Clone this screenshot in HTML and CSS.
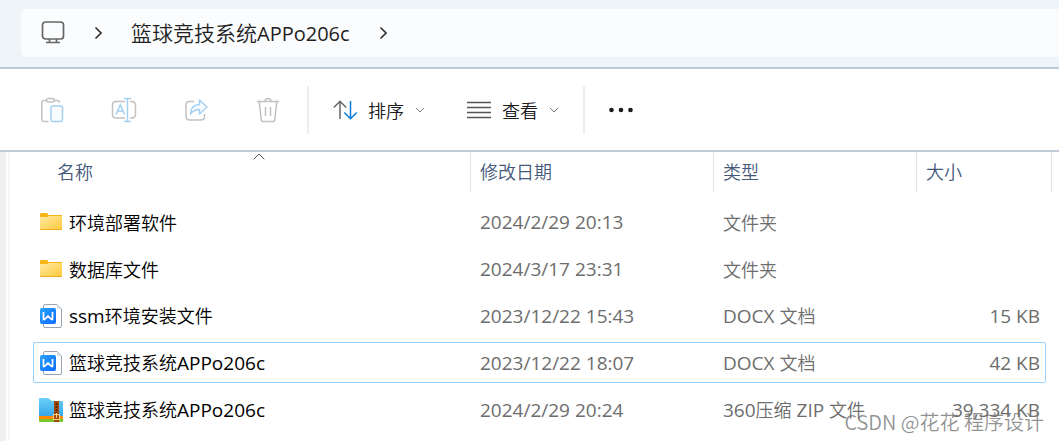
FILE: index.html
```html
<!DOCTYPE html>
<html lang="zh-CN">
<head>
  <meta charset="UTF-8" />
  <meta name="viewport" content="width=device-width, initial-scale=1.0"/>
  <title>篮球竞技系统APPo206c</title>
  <link rel="stylesheet" href="styles.css">
</head>
<body>

<svg class="defs" aria-hidden="true">
  <defs>
    <linearGradient id="folderFill" x1="0" y1="0" x2="1" y2="1">
      <stop offset="0" stop-color="#ffe9a2"/>
      <stop offset="1" stop-color="#ffcb3d"/>
    </linearGradient>
    <linearGradient id="docFill" x1="0" y1="0" x2="1" y2="1">
      <stop offset="0" stop-color="#29a3fb"/>
      <stop offset="1" stop-color="#0d6bff"/>
    </linearGradient>
    <linearGradient id="zipFill" x1="0" y1="0" x2="0" y2="1">
      <stop offset="0" stop-color="#69d0f8"/>
      <stop offset="1" stop-color="#35a3ea"/>
    </linearGradient>
  </defs>
  <symbol id="folder" viewBox="0 0 24 24">
    <path d="M1 4q0-1 1-1h6l1.500 2H23v4H1z" fill="#f9b515"/>
    <path d="M1 7h7.500L10 6h13v13H1z" fill="url(#folderFill)"/>
    <path d="M1 19h22q0 1-1 1H2q-1 0-1-1z" fill="#eeaa22"/>
  </symbol>
  <symbol id="docx" viewBox="0 0 24 24">
    <path d="M4.500 5V2q0-1.500 1.500-1.500h12l4.500 4.500v17q0 1.500-1.500 1.500H6q-1.500 0-1.500-1.500v-2" fill="#fff" stroke="#9aa2b3"/>
    <path d="M18.500 1V4q0 .5.500.500h3" fill="none" stroke="#d5d9e0"/>
    <rect x="1" y="4" width="16" height="16" rx="2" fill="url(#docFill)"/>
    <path d="M4.500 8v7.500h1L9 12l3.500 3.500h1V8" fill="none" stroke="#fff" stroke-width="1.700"/>
  </symbol>
  <symbol id="down" viewBox="0 0 10 6">
    <path d="M1 1l4 4 4-4" fill="none" stroke="#777"/>
  </symbol>
  <symbol id="next" viewBox="0 0 8 14">
    <path d="M1.500 1.500L7 7l-5.500 5.500" fill="none" stroke="#333" stroke-width="1.600"/>
  </symbol>
</svg>

<header class="topbar">
  <nav class="address" aria-label="路径">
    <a class="crumb" href="#" aria-label="此电脑">
      <svg width="24" height="24" viewBox="0 0 24 24" fill="none" stroke="#666" stroke-width="1.700">
        <rect x="1.500" y="1" width="21" height="17" rx="3"/>
        <path d="M8.500 18v3.500M15.500 18v3.500M5 21.500h14"/>
      </svg>
    </a>
    <svg class="sep" width="8" height="14"><use href="#next"/></svg>
    <a class="crumb" href="#">篮球竞技系统<span class="en">APPo206c</span></a>
    <svg class="sep" width="8" height="14"><use href="#next"/></svg>
  </nav>
</header>

<div class="toolbar">
  <div class="group icons">
    <button class="icon-btn" aria-label="粘贴" disabled>
      <svg width="24" height="26" viewBox="0 0 24 26" fill="none" stroke="#c2c2c2" stroke-width="1.500">
        <path d="M6 3.500H3.500q-1.700 0-1.700 1.700v17.600q0 1.700 1.700 1.700h5M15 3.500h2.500q1.700 0 1.700 1.700V6"/>
        <rect x="6.500" y="1.500" width="8" height="3.500" rx="1.700"/>
        <rect x="11" y="9" width="11.500" height="15.500" rx="1.700" stroke="#a4d0f2" fill="#f8fcff"/>
      </svg>
    </button>
    <button class="icon-btn" aria-label="重命名" disabled>
      <svg width="26" height="26" viewBox="0 0 26 26" fill="none" stroke="#c2c2c2" stroke-width="1.500">
        <path d="M14 4.500H5Q1.500 4.500 1.500 8v9.500Q1.500 21 5 21h9M19 4.500h1.500Q24.500 4.500 24.500 8.500v8.500q0 4-4 4H19"/>
        <path d="M5 17.500l4.300-9.700 4.200 9.700M6.700 14h5.200M13 1.500h7M13 24.500h7M16.500 1.500v23" stroke="#a4d0f2"/>
      </svg>
    </button>
    <button class="icon-btn" aria-label="共享" disabled>
      <svg width="24" height="24" viewBox="0 0 24 24" fill="none" stroke="#c2c2c2" stroke-width="1.500">
        <path d="M10 3.500H5.500Q2 3.500 2 7v11.500Q2 22 5.500 22H17q3.500 0 3.500-3.500V16"/>
        <path d="M15.500 2v4.500Q7 6.500 6.500 16q3.500-4.500 9-4.500V16l7.500-7z" stroke="#a4d0f2" stroke-linejoin="round" fill="#f8fcff"/>
      </svg>
    </button>
    <button class="icon-btn" aria-label="删除" disabled>
      <svg width="24" height="26" viewBox="0 0 24 26" fill="none" stroke="#c2c2c2" stroke-width="1.500">
        <path d="M1 4.500h22M3.200 4.500l2 18q.2 2 2.200 2h9.200q2 0 2.200-2l2-18M9 4.500q0-3 3-3t3 3M9.500 10v9M14.500 10v9"/>
      </svg>
    </button>
  </div>
  <div class="group menus">
    <button class="menu-btn">
      <svg width="24" height="20" viewBox="0 0 24 20" fill="none" stroke-width="1.500">
        <path d="M7 19V1.500M.8 7.500L7 1.300l6.200 6.200" stroke="#666"/>
        <path d="M17.500 1v17.500M11.300 12.500l6.200 6.200 6.200-6.200" stroke="#0a7bd8"/>
      </svg>
      排序
      <svg width="10" height="6"><use href="#down"/></svg>
    </button>
    <button class="menu-btn">
      <svg width="24" height="18" viewBox="0 0 24 18" stroke="#555" stroke-width="1.300">
        <path d="M0 1.500h24M0 6.500h24M0 11.500h24M0 16.500h24"/>
      </svg>
      查看
      <svg width="10" height="6"><use href="#down"/></svg>
    </button>
  </div>
  <div class="group more">
    <button class="more-btn" aria-label="更多">
      <svg width="24" height="6" viewBox="0 0 24 6" fill="#1a1a1a">
        <circle cx="2.500" cy="3" r="2.300"/><circle cx="12" cy="3" r="2.300"/><circle cx="21.500" cy="3" r="2.300"/>
      </svg>
    </button>
  </div>
</div>

<main class="files">
  <table>
    <thead>
      <tr>
        <th class="name"><div class="head">名称<svg class="sort" width="12" height="7" viewBox="0 0 12 7" fill="none" stroke="#555"><path d="M.7 6.300L6 1l5.300 5.300"/></svg></div></th>
        <th class="date"><div class="head">修改日期</div></th>
        <th class="type"><div class="head">类型</div></th>
        <th class="size"><div class="head">大小</div></th>
      </tr>
    </thead>
    <tbody>
      <tr>
        <td><div class="file"><svg width="24" height="24"><use href="#folder"/></svg>环境部署软件</div></td>
        <td><span class="en">2024/2/29 20:13</span></td>
        <td>文件夹</td>
        <td></td>
      </tr>
      <tr>
        <td><div class="file"><svg width="24" height="24"><use href="#folder"/></svg>数据库文件</div></td>
        <td><span class="en">2024/3/17 23:31</span></td>
        <td>文件夹</td>
        <td></td>
      </tr>
      <tr>
        <td><div class="file"><svg width="24" height="24"><use href="#docx"/></svg><span><span class="en">ssm</span>环境安装文件</span></div></td>
        <td><span class="en">2023/12/22 15:43</span></td>
        <td><span class="en">DOCX </span>文档</td>
        <td><span class="en">15 KB</span></td>
      </tr>
      <tr class="focused">
        <td><div class="file"><svg width="24" height="24"><use href="#docx"/></svg><span>篮球竞技系统<span class="en">APPo206c</span></span></div></td>
        <td><span class="en">2023/12/22 18:07</span></td>
        <td><span class="en">DOCX </span>文档</td>
        <td><span class="en">42 KB</span></td>
      </tr>
      <tr>
        <td>
          <div class="file">
            <svg width="24" height="24" viewBox="0 0 24 24">
              <path d="M0 1q0-1 1-1h8l4 3h10q1 0 1 1v15H0z" fill="url(#zipFill)"/>
              <path d="M0 18h24v3H0z" fill="#ff8a00"/>
              <path d="M0 21h24v2q0 1-1 1H1q-1 0-1-1z" fill="#7cc52c"/>
              <path d="M15 3h5v21h-5z" fill="#a04a10"/>
              <path d="M17.500 5v10" stroke="#5a2706" stroke-width="2" stroke-dasharray="2 1"/>
              <path d="M14.500 16.500h6v5h-6zM17.500 15v5" fill="none" stroke="#ffd27a"/>
            </svg>
            <span>篮球竞技系统<span class="en">APPo206c</span></span>
          </div>
        </td>
        <td><span class="en">2024/2/29 20:24</span></td>
        <td><span class="en">360</span>压缩<span class="en"> ZIP </span>文件</td>
        <td><span class="en">39,334 KB</span></td>
      </tr>
    </tbody>
  </table>
</main>

<div class="watermark">CSDN @花花 程序设计</div>

</body>
</html>
```
FILE: styles.css
```css
* {
  box-sizing: border-box;
}
body {
  margin: 0;
  min-height: 100vh;
  display: flex;
  flex-direction: column;
  position: relative;
  background: #fff;
  color: #000;
  font-family: "Noto Sans CJK SC", sans-serif;
  font-size: 18px;
  font-weight: 350;
  line-height: 24px;
}
button {
  border: none;
  background: none;
  padding: 0;
  font: inherit;
  color: #1a1a1a;
}
svg {
  display: block;
  flex: none;
}
.defs {
  position: absolute;
  width: 0;
  height: 0;
}
.en {
  font-family: "Open Sans", sans-serif;
  font-size: 19px;
  font-weight: 400;
}

/* address bar */
.topbar {
  background: #eff4f8;
  border-bottom: 2px solid #c0cad6;
  padding: 9px 0 10px 21px;
}
.address {
  display: flex;
  align-items: center;
  height: 48px;
  padding-left: 20px;
  background: #fbfcfe;
  border-radius: 6px 0 0 6px;
}
.crumb {
  color: #1f1f1f;
  text-decoration: none;
  font-size: 21px;
}
.crumb .en {
  font-size: 20px;
}
.sep {
  margin: 0 29px;
}

/* toolbar */
.toolbar {
  display: flex;
  align-items: center;
  height: 83px;
  padding-left: 28px;
  border-bottom: 2px solid #c0cad6;
}
.group {
  display: flex;
  align-items: center;
  height: 48px;
}
.icons {
  gap: 24px;
  padding-right: 15px;
}
.icon-btn {
  display: flex;
  justify-content: center;
  width: 48px;
}
.menus {
  gap: 42px;
  padding: 0 24px;
  border-left: 2px solid #ededed;
  border-right: 2px solid #ededed;
}
.menu-btn {
  display: flex;
  align-items: center;
  gap: 11px;
}
.more {
  padding-left: 24px;
}

/* file list */
.files {
  flex: 1;
  padding: 0 13px 0 23px;
  margin-left: 8px;
  border-left: 2px solid #f6f6f6;
  box-shadow: -2px 0 #fff, -8px 0 #f0f0f0;
}
table {
  width: 100%;
  margin-top: -6px;
  table-layout: fixed;
  border-collapse: separate;
  border-spacing: 0 6px;
}
th, td {
  padding: 0;
  text-align: left;
  white-space: nowrap;
}
th {
  height: 43px;
  vertical-align: top;
  font-weight: 350;
  color: #44597a;
}
.head {
  position: relative;
  height: 40px;
  padding: 7px 0 0 9px;
  border-right: 1px solid #e2e2e2;
}
.date { width: 243px; }
.type { width: 203px; }
.size { width: 129px; }
.name .head {
  margin-left: 15px;
}
.size .head {
  margin-right: -6px;
}
.sort {
  position: absolute;
  top: 1px;
  left: 50%;
  transform: translateX(-50%);
}
td {
  height: 41px;
  padding-left: 9px;
  border: 1px solid transparent;
  border-width: 1px 0;
  color: #6d6d6d;
}
td:first-child {
  padding-left: 5px;
  border-left-width: 1px;
  color: #000;
}
td:last-child {
  padding: 0 5px 0 0;
  border-right-width: 1px;
  text-align: right;
}
.focused td {
  border-color: #99d1ff;
}
.focused td:first-child {
  border-radius: 2px 0 0 2px;
}
.focused td:last-child {
  border-radius: 0 2px 2px 0;
}
.file {
  display: flex;
  align-items: center;
  gap: 6px;
}

.watermark {
  position: absolute;
  right: 15px;
  bottom: 7px;
  font-size: 20px;
  color: rgba(110, 110, 110, 0.75);
}
```
